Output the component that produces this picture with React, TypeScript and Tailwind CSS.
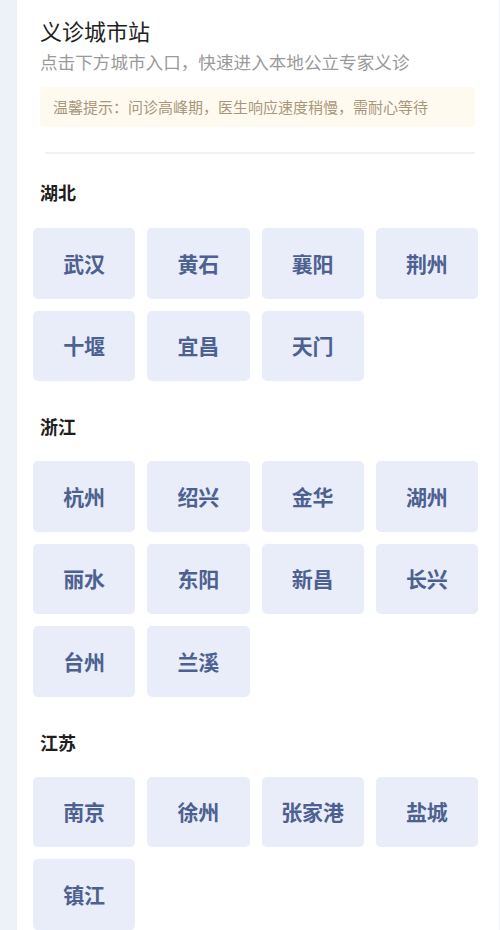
import React from "react";

const sections: { name: string; cities: string[] }[] = [
  { name: "湖北", cities: ["武汉", "黄石", "襄阳", "荆州", "十堰", "宜昌", "天门"] },
  { name: "浙江", cities: ["杭州", "绍兴", "金华", "湖州", "丽水", "东阳", "新昌", "长兴", "台州", "兰溪"] },
  { name: "江苏", cities: ["南京", "徐州", "张家港", "盐城", "镇江"] },
];

export default function App() {
  return (
    <div
      className="flex w-[500px] h-[930px] overflow-hidden bg-[#eef2f9]"
      style={{ fontFamily: '"Noto Sans CJK SC", "Noto Sans", sans-serif' }}
    >
      <div className="w-[17px] shrink-0 bg-[#edf2f9]" />
      <div className="flex-1 bg-white mr-[1px] flex flex-col">
        <div className="pl-[23px] pr-[24px] pt-[14px]">
          <div className="text-[22px] leading-[32px] text-[#222]">义诊城市站</div>
          <div className="mt-[4px] text-[17.6px] leading-[24px] text-[#9a9a9a]">
            点击下方城市入口，快速进入本地公立专家义诊
          </div>
          <div className="mt-[13px] h-[40px] rounded-[4px] bg-[#fffaf0] flex items-center pl-[13px] text-[15px] text-[#a8977a]">
            温馨提示：问诊高峰期，医生响应速度稍慢，需耐心等待
          </div>
          <div className="mt-[25px] ml-[5px] h-[2px] bg-[#f1f2f5]" />
        </div>
        {sections.map((s, i) => (
          <div key={s.name} className="flex flex-col">
            <div
              className={
                i === 0
                  ? "pl-[23px] mt-[25px] text-[18px] leading-[26px] font-bold text-[#1e1e1e]"
                  : "pl-[23px] mt-[32px] text-[18px] leading-[26px] font-bold text-[#1e1e1e]"
              }
            >
              {s.name}
            </div>
            <div
              className={
                i === 0
                  ? "ml-[16px] mr-[21px] mt-[23px] grid grid-cols-4 gap-x-[12px] gap-y-[12px]"
                  : "ml-[16px] mr-[21px] mt-[22px] grid grid-cols-4 gap-x-[12px] gap-y-[12px]"
              }
            >
              {s.cities.map((c) => (
                <div
                  key={c}
                  className="h-[70.5px] rounded-[5px] bg-[#e9edfa] flex items-center justify-center text-[21px] font-bold text-[#4d6190]"
                >
                  {c}
                </div>
              ))}
            </div>
          </div>
        ))}
      </div>
    </div>
  );
}
